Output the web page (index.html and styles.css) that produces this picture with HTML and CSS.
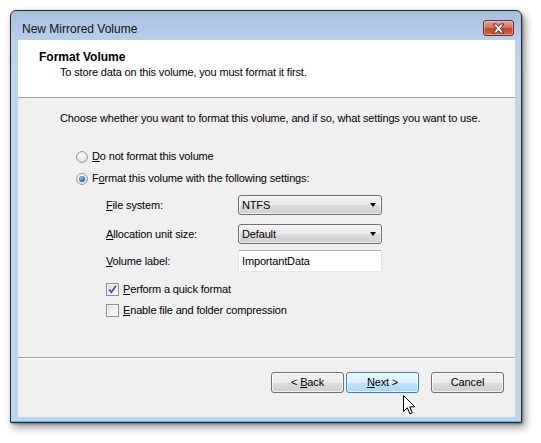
FILE: index.html
```html
<!DOCTYPE html>
<html>
<head>
<meta charset="utf-8">
<link rel="stylesheet" href="styles.css">
</head>
<body>
<div class="window">
  <div class="titlebar">
    <span class="title">New Mirrored Volume</span>
    <div class="close">
      <svg width="15" height="11" viewBox="0 0 15 11"><path d="M2 1 L5.5 1 L7.5 3.5 L9.5 1 L13 1 L9.3 5.5 L13 10 L9.5 10 L7.5 7.5 L5.5 10 L2 10 L5.7 5.5 Z" fill="#fff" stroke="#5a2a2a" stroke-width="1" stroke-linejoin="round"/></svg>
    </div>
  </div>
  <div class="client">
    <div class="header">
      <div class="h-title">Format Volume</div>
      <div class="h-sub">To store data on this volume, you must format it first.</div>
    </div>
    <div class="body">
      <div class="intro">Choose whether you want to format this volume, and if so, what settings you want to use.</div>
      <div class="options">
        <div class="row radio-row first"><span class="radio"></span><span><u>D</u>o not format this volume</span></div>
        <div class="row radio-row second"><span class="radio checked"></span><span>F<u>o</u>rmat this volume with the following settings:</span></div>
        <div class="settings">
          <div class="field f1"><span class="label"><u>F</u>ile system:</span><span class="combo">NTFS<span class="arrow"></span></span></div>
          <div class="field f2"><span class="label"><u>A</u>llocation unit size:</span><span class="combo">Default<span class="arrow"></span></span></div>
          <div class="field f3"><span class="label"><u>V</u>olume label:</span><span class="textbox">ImportantData</span></div>
          <div class="row check-row c1"><span class="check checked"><svg width="11" height="11" viewBox="0 0 11 11"><path d="M2 5.5 L4.3 8.2 L9 1.8" fill="none" stroke="#3d5a9b" stroke-width="1.8"/></svg></span><span><u>P</u>erform a quick format</span></div>
          <div class="row check-row c2"><span class="check"></span><span><u>E</u>nable file and folder compression</span></div>
        </div>
      </div>
    </div>
    <div class="footer">
      <span class="btn back">&lt; <u>B</u>ack</span>
      <span class="btn next"><u>N</u>ext &gt;</span>
      <span class="btn cancel">Cancel</span>
    </div>
  </div>
</div>
<svg class="cursor" width="13" height="21" viewBox="0 0 13 21"><path d="M0.5 0.5 L0.5 16.5 L4.3 12.8 L6.8 18.8 L9.3 17.8 L6.8 11.8 L11.8 11.8 Z" fill="#fff" stroke="#000" stroke-width="1" stroke-linejoin="miter"/></svg>
</body>
</html>
```
FILE: styles.css
```css
html, body {
  margin: 0;
  padding: 0;
  background: #fff;
}
body {
  font-family: "Liberation Sans", "DejaVu Sans", sans-serif;
  font-size: 11px;
  letter-spacing: -0.15px;
  color: #000;
  width: 541px;
  height: 443px;
  overflow: hidden;
  position: relative;
}
u { text-decoration: underline; text-underline-offset: 1px; }

.window {
  margin: 10px 0 0 10px;
  width: 512px;
  height: 413px;
  box-sizing: border-box;
  border: 1px solid #2a2a2a;
  border-radius: 6px 6px 0 0;
  background: linear-gradient(to bottom, #a7c1e0 0px, #b8cfea 30px, #bfd5ed 60px, #bed5ed 100%);
  box-shadow: 3px 4px 9px rgba(0,0,0,0.45), 1px 1px 2px rgba(0,0,0,0.3);
  display: flex;
  flex-direction: column;
  padding: 0 6px 5px 7px;
  position: relative;
}
.window::after {
  content: "";
  position: absolute;
  left: 0; right: 0; bottom: 0;
  height: 1px;
  background: #4fc0e8;
}

.titlebar {
  height: 29px;
  display: flex;
  align-items: flex-start;
  justify-content: space-between;
}
.title {
  padding: 11px 0 0 4px;
  line-height: 15px;
  font-size: 12px;
  letter-spacing: 0;
  color: #111;
}
.close {
  margin-top: 9px;
  margin-right: 1px;
  width: 31px;
  height: 16px;
  box-sizing: border-box;
  border: 1px solid #6b2b26;
  border-radius: 3px;
  background: linear-gradient(to bottom, #e8a493 0%, #d4735f 45%, #c0442d 55%, #cf6a4e 100%);
  display: flex;
  align-items: center;
  justify-content: center;
  box-shadow: inset 0 0 0 1px rgba(255,255,255,0.35);
}

.client {
  flex: 1;
  display: flex;
  flex-direction: column;
  background: #f0f0f0;
}
.header {
  height: 57px;
  background: #fff;
  border-bottom: 1px solid #a0a0a0;
}
.h-title {
  font-weight: bold;
  font-size: 12px;
  letter-spacing: 0;
  line-height: 15px;
  padding: 10px 0 0 21px;
}
.h-sub {
  line-height: 15px;
  padding-left: 42px;
}

.body {
  flex: 1;
  padding: 13px 0 0 42px;
}
.intro {
  line-height: 15px;
}
.options {
  padding-left: 16px;
}
.row {
  display: flex;
  align-items: center;
  height: 17px;
  line-height: 15px;
}
.radio-row.first { margin-top: 22px; }
.radio-row.second { margin-top: 5px; }
.radio {
  width: 12px;
  height: 12px;
  box-sizing: border-box;
  border-radius: 50%;
  border: 1px solid #9a9a9a;
  background: radial-gradient(circle at 40% 35%, #ffffff 0%, #eeeeee 40%, #d2d2d2 100%);
  margin-right: 4px;
  position: relative;
  flex: none;
}
.radio.checked::after {
  content: "";
  position: absolute;
  left: 2px; top: 2px;
  width: 6px; height: 6px;
  border-radius: 50%;
  background: radial-gradient(circle at 40% 35%, #8fd2ff 0%, #2a7fcf 50%, #0f3f7c 100%);
}

.settings {
  padding-left: 30px;
}
.field {
  display: grid;
  grid-template-columns: 132px 144px;
  align-items: center;
}
.f1 { margin-top: 8px; }
.f2 { margin-top: 9px; }
.f3 { margin-top: 6px; }
.label { line-height: 15px; }
.combo {
  height: 20px;
  box-sizing: border-box;
  border: 1px solid #707070;
  border-radius: 3px;
  background: linear-gradient(to bottom, #f3f3f3 0%, #ebebeb 50%, #dddddd 51%, #cfcfcf 100%);
  box-shadow: inset 0 0 0 1px rgba(255,255,255,0.6);
  padding-left: 3px;
  line-height: 18px;
  position: relative;
}
.arrow {
  position: absolute;
  right: 5px;
  top: 7px;
  width: 0; height: 0;
  border-left: 3.5px solid transparent;
  border-right: 3.5px solid transparent;
  border-top: 4px solid #000;
}
.textbox {
  height: 22px;
  box-sizing: border-box;
  border: 1px solid #abadb3;
  border-left-color: #e2e3ea;
  border-right-color: #dbdfe6;
  border-bottom-color: #e3e9ef;
  border-radius: 2px;
  background: #fff;
  padding-left: 3px;
  line-height: 20px;
}
.c1 { margin-top: 9px; }
.c2 { margin-top: 4px; }
.check {
  width: 13px;
  height: 13px;
  box-sizing: border-box;
  border: 1px solid #8e8f8f;
  background: linear-gradient(135deg, #dcdcdc 0%, #f4f4f4 60%, #ffffff 100%);
  box-shadow: inset 0 0 0 1px #f4f4f4;
  margin-right: 4px;
  flex: none;
  display: flex;
  align-items: center;
  justify-content: center;
}

.footer {
  height: 45px;
  border-top: 1px solid #a0a0a0;
  box-shadow: inset 0 1px 0 #fff;
  display: flex;
  align-items: flex-start;
  padding: 14px 11px 0 0;
  justify-content: flex-end;
}
.btn {
  width: 73px;
  height: 21px;
  box-sizing: border-box;
  border: 1px solid #707070;
  border-radius: 3px;
  background: linear-gradient(to bottom, #f2f2f2 0%, #ebebeb 50%, #dddddd 51%, #cfcfcf 100%);
  box-shadow: inset 0 0 0 1px rgba(255,255,255,0.7);
  text-align: center;
  line-height: 19px;
}
.btn.back { margin-right: 2px; }
.btn.next {
  margin-right: 12px;
  border-color: #3c7fb1;
  background: linear-gradient(to bottom, #eaf6fd 0%, #d9f0fc 50%, #bee6fd 51%, #a7d9f5 100%);
}

.cursor {
  position: absolute;
  left: 403px;
  top: 395px;
}
```
